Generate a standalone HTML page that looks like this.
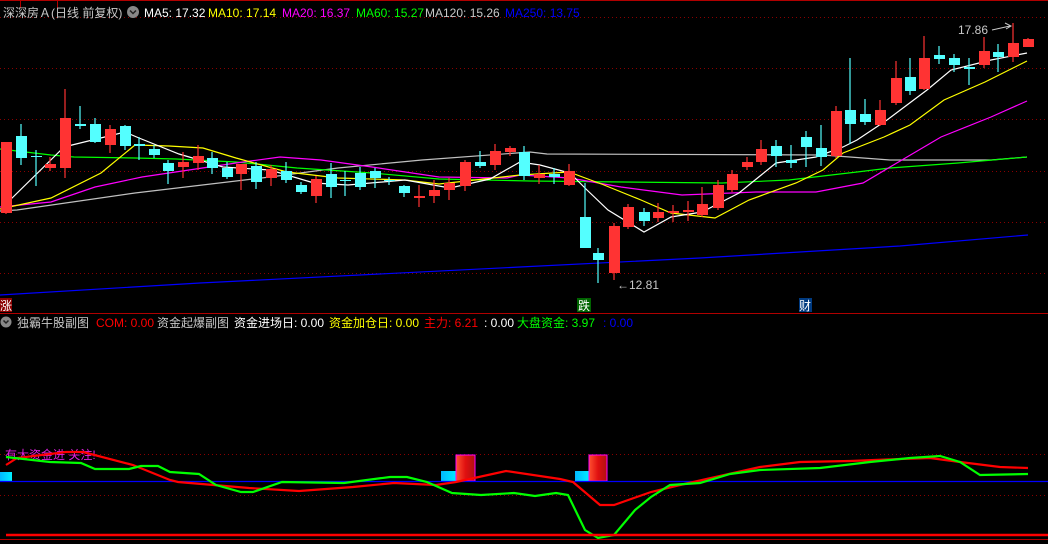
<!DOCTYPE html>
<html><head><meta charset="utf-8"><style>
html,body{margin:0;padding:0;background:#000;width:1048px;height:544px;overflow:hidden}
svg{display:block}
text{font-family:"Liberation Sans","Noto Sans CJK SC",sans-serif;font-size:12px}
</style></head><body>
<svg width="1048" height="544" viewBox="0 0 1048 544">
<rect width="1048" height="544" fill="#000"/>
<line x1="0" y1="0.5" x2="1048" y2="0.5" stroke="#b00000"/>
<line x1="20.5" y1="0" x2="20.5" y2="8" stroke="#b00000"/>
<line x1="57.5" y1="0" x2="57.5" y2="8" stroke="#b00000"/>
<g stroke="#8a0000" stroke-dasharray="1,3">
<line x1="0" y1="17.5" x2="1048" y2="17.5"/>
<line x1="0" y1="68.5" x2="1048" y2="68.5"/>
<line x1="0" y1="119.5" x2="1048" y2="119.5"/>
<line x1="0" y1="171.5" x2="1048" y2="171.5"/>
<line x1="0" y1="222.5" x2="1048" y2="222.5"/>
<line x1="0" y1="273.5" x2="1048" y2="273.5"/>
<line x1="0" y1="454.5" x2="1048" y2="454.5"/>
<line x1="0" y1="495.5" x2="1048" y2="495.5"/>
</g>
<!-- header -->
<text x="3" y="17" fill="#c8c8c8">深深房Ａ(日线 前复权)</text>
<circle cx="133" cy="12" r="6" fill="#888"/><path d="M130 10.5l3 3 3-3" stroke="#222" stroke-width="1.5" fill="none"/>
<text x="144" y="17" fill="#fff">MA5: 17.32</text>
<text x="208" y="17" fill="#ff0">MA10: 17.14</text>
<text x="282" y="17" fill="#f0f">MA20: 16.37</text>
<text x="356" y="17" fill="#0f0">MA60: 15.27</text>
<text x="425" y="17" fill="#c8c8c8">MA120: 15.26</text>
<text x="505" y="17" fill="#0000ff">MA250: 13.75</text>
<!-- MA lines -->
<g fill="none" stroke-width="1.2">
<polyline stroke="#0000ff" points="0,295 200,283 520,267 700,258 900,246 1028,235"/>
<polyline stroke="#c0c0c0" points="0,211 17,210 135,193 270,177 338,168 422,160 530,152 547,154 823,155 890,160 991,160 1027,157"/>
<polyline stroke="#00ff00" points="0,149 51,155 74,157 135,158 176,159 236,162 297,168 372,173 439,179 530,181 722,183 789,180 857,172 890,168 958,163 1027,157"/>
<polyline stroke="#ff00ff" points="0,207 51,202 95,187 142,177 189,170 236,163 280,157 321,160 372,167 439,177 507,178 520,175 570,178 621,187 682,195 756,192 816,192 863,183 890,167 941,137 991,117 1027,101"/>
<polyline stroke="#ffff00" points="0,209 51,198 101,173 135,145 169,146 203,148 236,158 287,172 338,178 405,180 439,184 520,175 569,172 604,185 641,200 671,213 715,218 749,200 796,183 823,170 843,153 884,137 910,125 944,100 985,82 1027,61"/>
<polyline stroke="#ffffff" points="7,203 61,150 68,146 125,132 139,138 179,154 223,167 270,170 314,183 348,185 405,180 450,188 490,179 520,162 540,165 570,173 587,190 608,210 644,232 671,217 702,212 739,193 776,163 816,157 843,147 857,140 887,120 907,105 927,90 951,70 991,60 1027,53"/>
</g>
<!-- candles -->
<g id="c"></g>
<!-- labels -->
<text x="617" y="289" fill="#c8c8c8">←12.81</text>
<text x="958" y="34" fill="#c8c8c8">17.86</text>
<path d="M992 30 L1010 26 M1005 23 L1011 26 L1006 29" stroke="#c8c8c8" fill="none"/>
<rect x="0" y="298" width="12" height="14" fill="#8b0000"/><text x="0" y="310" fill="#fff">涨</text>
<rect x="577" y="298" width="14" height="14" fill="#006400"/><text x="578" y="310" fill="#fff">跌</text>
<rect x="799" y="298" width="13" height="14" fill="#003a80"/><text x="799" y="310" fill="#fff">财</text>
<line x1="0" y1="313.5" x2="1048" y2="313.5" stroke="#b00000"/>
<circle cx="6" cy="322" r="5.5" fill="#888"/><path d="M3.5 320.5l2.5 2.5 2.5-2.5" stroke="#222" stroke-width="1.5" fill="none"/>
<text x="17" y="327" fill="#c8c8c8">独霸牛股副图</text>
<text x="96" y="327" fill="#ff0000">COM: 0.00</text>
<text x="157" y="327" fill="#c8c8c8">资金起爆副图</text>
<text x="234" y="327" fill="#fff">资金进场日: 0.00</text>
<text x="329" y="327" fill="#ff0">资金加仓日: 0.00</text>
<text x="424" y="327" fill="#ff0000">主力: 6.21</text>
<text x="484" y="327" fill="#fff">: 0.00</text>
<text x="517" y="327" fill="#00ff00">大盘资金: 3.97</text>
<text x="603" y="327" fill="#0000ff">: 0.00</text>
<!-- sub chart -->
<defs><linearGradient id="rg" x1="0" x2="1"><stop offset="0" stop-color="#ff5030"/><stop offset="0.5" stop-color="#e01010"/><stop offset="1" stop-color="#b01010"/></linearGradient>
<linearGradient id="cg" x1="0" x2="1"><stop offset="0" stop-color="#00b8ff"/><stop offset="1" stop-color="#00f0ff"/></linearGradient></defs>
<rect x="0" y="472" width="12" height="9" fill="url(#cg)"/>
<rect x="441" y="471" width="16" height="10" fill="url(#cg)"/>
<rect x="456" y="455" width="19" height="26" fill="url(#rg)" stroke="#f0f"/>
<rect x="575" y="471" width="15" height="10" fill="url(#cg)"/>
<rect x="589" y="455" width="18" height="26" fill="url(#rg)" stroke="#f0f"/>
<line x1="0" y1="481.5" x2="1048" y2="481.5" stroke="#0000ff" stroke-width="1.2"/>
<text x="5" y="459" fill="#e020e0">有大资金进 关注!</text>
<polyline fill="none" stroke="#ff0000" stroke-width="2.2" points="6,465 17,458 66,452 83,452 133,465 170,480 178,482 249,488 299,491 353,487 394,483 436,485 456,482 506,471 560,479 573,482 600,505 614,505 651,492 680,485 720,476 760,467 800,462 850,461 900,459 930,458 960,462 1000,467 1028,468"/>
<polyline fill="none" stroke="#00ff00" stroke-width="2.2" points="6,457 50,462 81,463 95,469 129,469 141,466 158,466 170,472 199,474 216,485 241,492 253,492 282,482 344,483 390,477 407,477 427,482 452,493 481,495 514,493 535,496 556,493 568,495 585,530 598,538 614,535 635,510 651,497 670,485 700,483 730,474 760,470 820,468 870,462 910,458 940,456 960,462 980,475 1028,474"/>
<line x1="6" y1="535" x2="1048" y2="535" stroke="#ff0000" stroke-width="2.5"/>
<line x1="0" y1="539.5" x2="1048" y2="539.5" stroke="#b00000"/>
</svg>
<script>
var d=[[6,'r',142,213,142,214],[21,'c',136,158,124,165],[36,'c',156,157,150,186],[50,'r',164,168,157,171],[65,'r',118,168,89,178],[80,'c',124,126,106,129],[95,'c',124,142,118,143],[110,'r',129,145,125,153],[125,'c',126,146,125,150],[139,'c',144,146,137,160],[154,'c',149,155,145,158],[168,'c',163,171,160,184],[183,'r',162,167,152,178],[198,'r',156,163,145,170],[212,'c',158,168,152,174],[227,'c',168,177,162,179],[241,'r',164,174,164,190],[256,'c',166,182,162,189],[271,'r',169,178,165,186],[286,'c',171,180,162,183],[301,'c',185,192,182,194],[316,'r',179,196,176,203],[331,'c',174,187,163,198],[345,'c',180,181,171,196],[360,'c',173,187,167,190],[375,'c',171,178,168,188],[389,'c',180,181,177,185],[404,'c',186,193,185,197],[419,'r',196,198,185,207],[434,'r',190,196,180,203],[449,'r',183,190,178,200],[465,'r',162,186,160,191],[480,'c',162,166,151,168],[495,'r',151,165,144,170],[510,'r',148,152,146,156],[524,'c',152,176,146,180],[539,'r',174,178,165,184],[554,'c',174,177,168,184],[569,'r',171,185,164,186],[585,'c',217,248,183,248],[598,'c',253,260,248,283],[614,'r',226,273,223,280],[628,'r',207,227,204,229],[644,'c',212,221,208,226],[658,'r',212,218,203,222],[673,'r',211,213,205,222],[688,'r',210,212,201,221],[702,'r',204,215,187,217],[718,'r',185,208,180,210],[732,'r',174,190,170,192],[747,'r',162,167,157,170],[761,'r',149,162,140,165],[776,'c',146,156,140,167],[791,'c',160,163,145,168],[806,'c',137,147,131,167],[821,'c',148,157,125,166],[836,'r',111,156,106,158],[850,'c',110,124,58,144],[865,'c',114,122,99,125],[880,'r',110,125,100,126],[896,'r',78,103,61,105],[910,'c',77,91,58,95],[924,'r',58,89,36,90],[939,'c',55,59,46,64],[954,'c',58,65,54,72],[969,'c',67,69,58,85],[984,'r',51,65,37,68],[998,'c',52,57,44,72],[1013,'r',43,57,23,62],[1028,'r',39,47,38,47]];
var s='';d.forEach(function(k){var col=k[1]=='r'?'#ff3333':'#54ffff';var h=Math.max(1,k[3]-k[2]);
s+='<line x1="'+k[0]+'" x2="'+k[0]+'" y1="'+k[4]+'" y2="'+k[5]+'" stroke="'+col+'" stroke-width="1.2"/>';
s+='<rect x="'+(k[0]-5)+'" y="'+k[2]+'" width="11" height="'+h+'" fill="'+col+'"/>';});
document.getElementById('c').innerHTML=s;
</script>
</body></html>
